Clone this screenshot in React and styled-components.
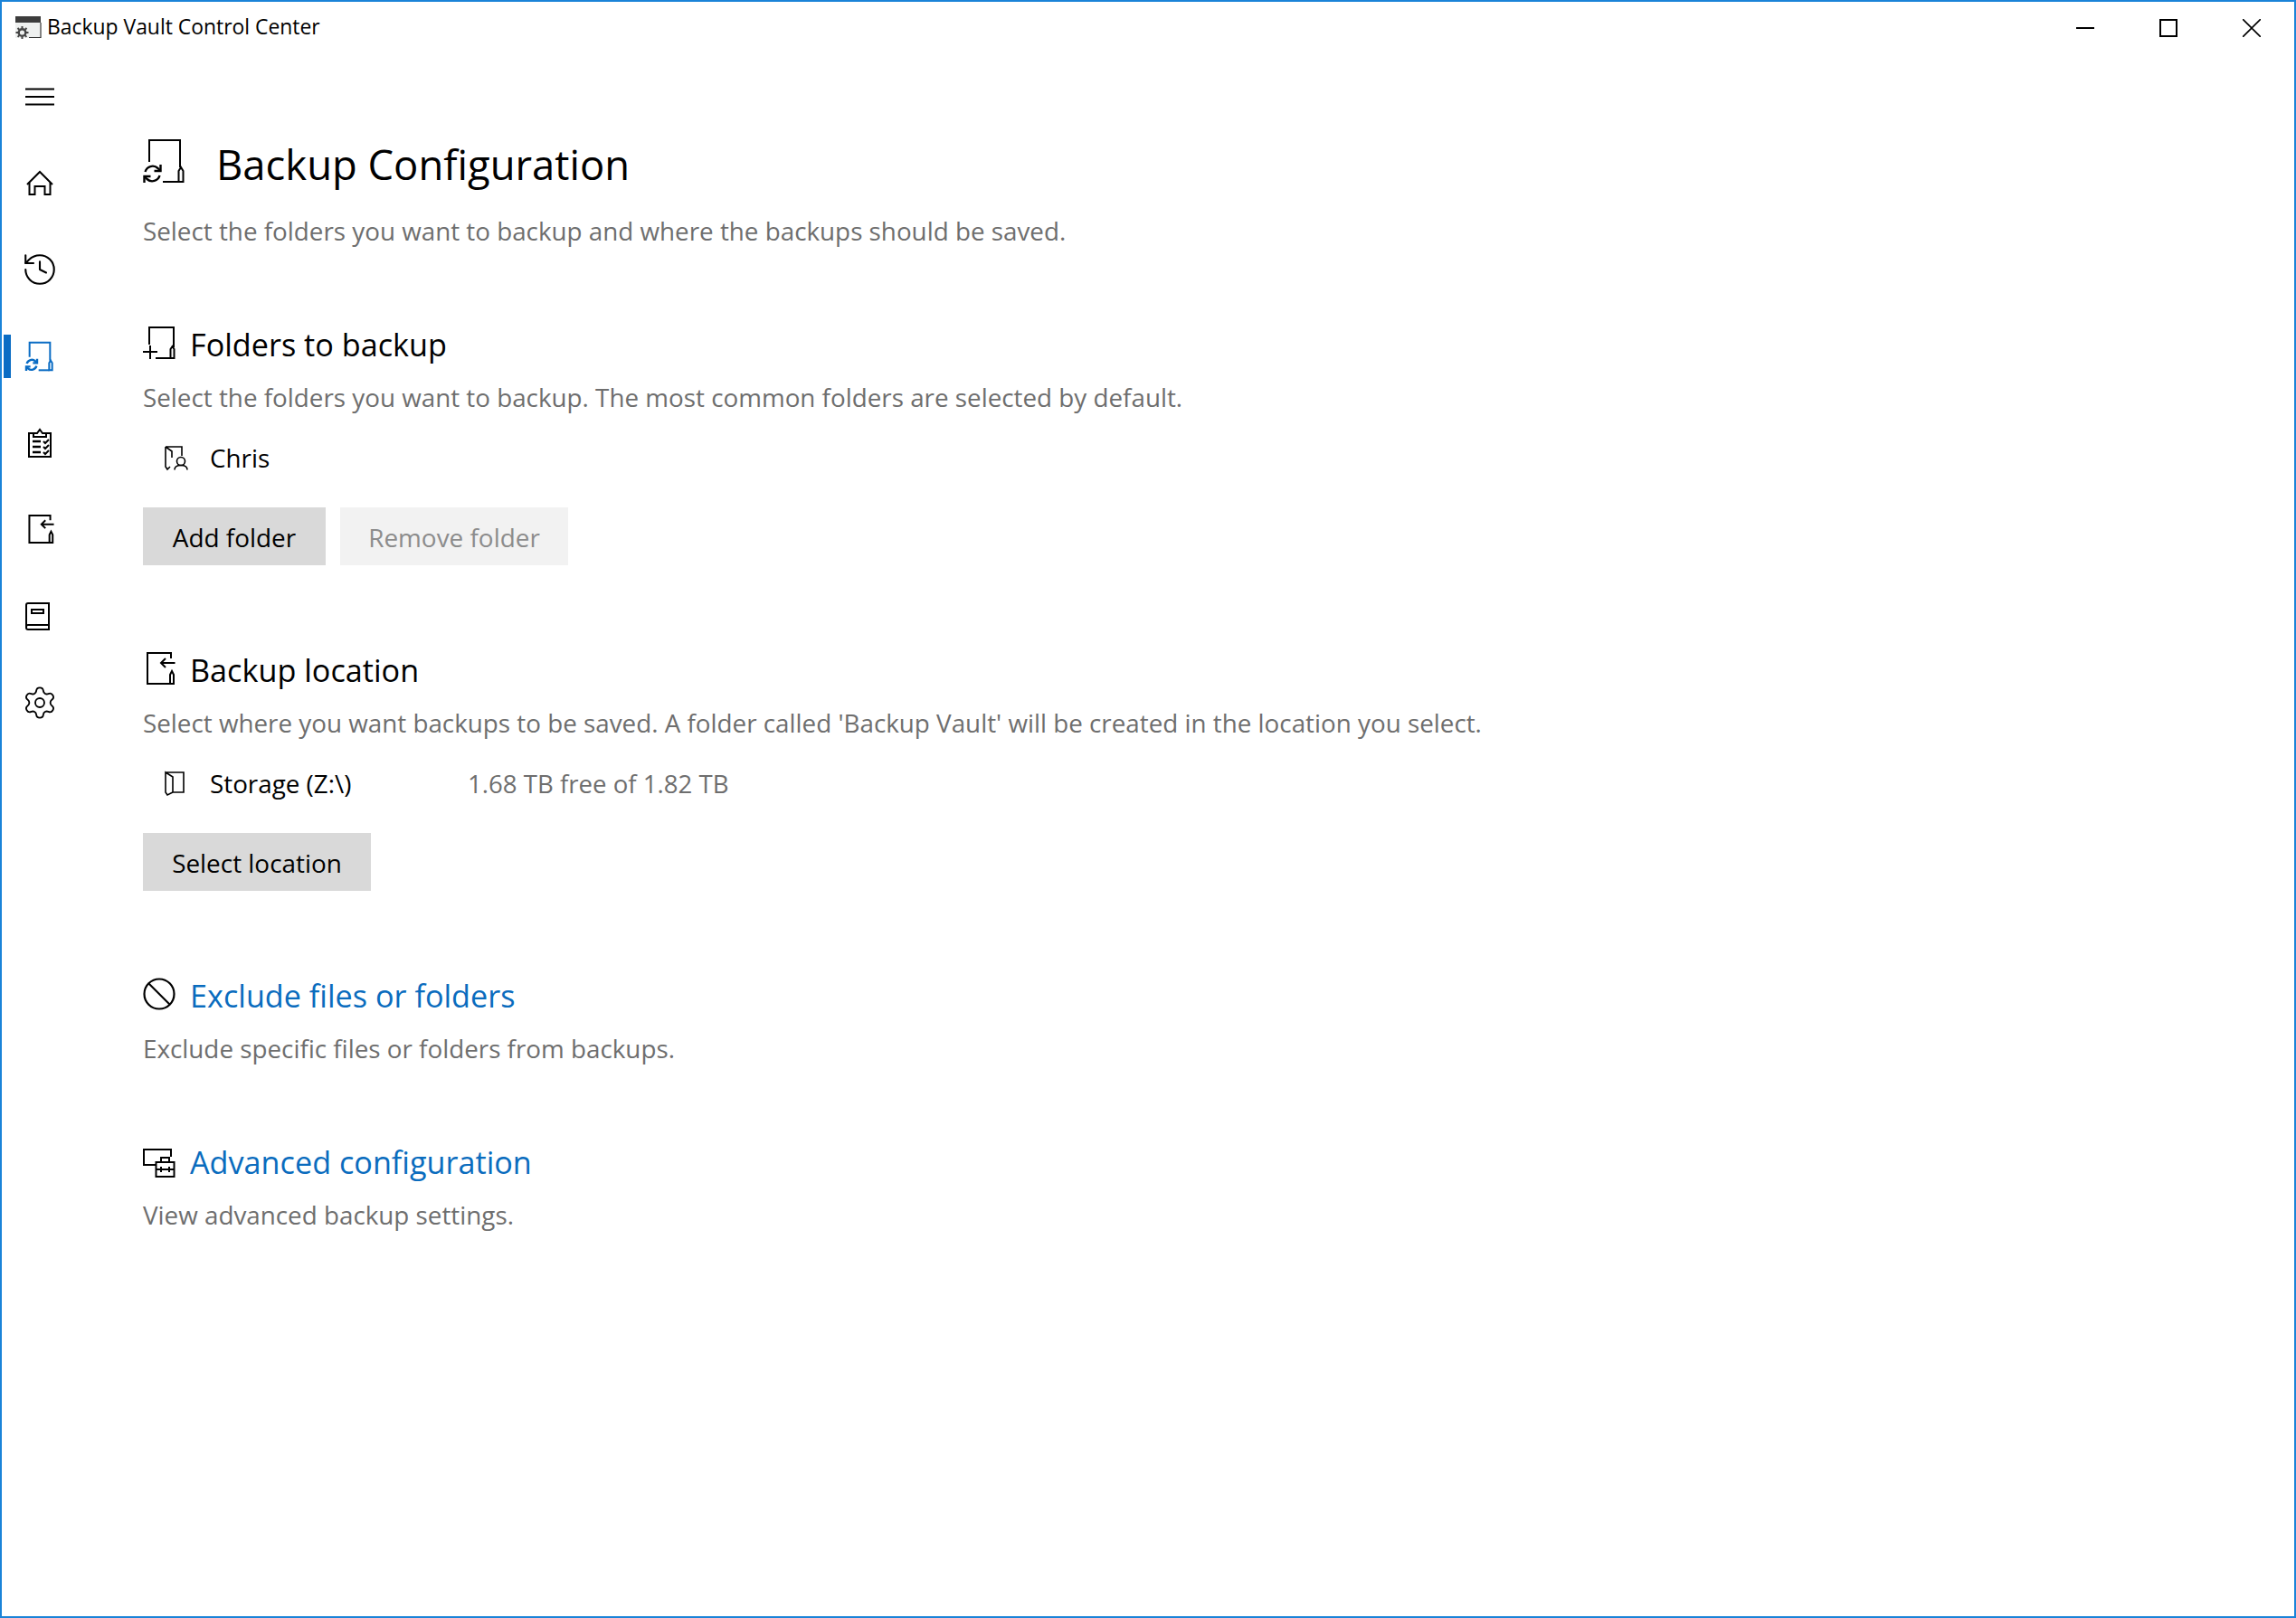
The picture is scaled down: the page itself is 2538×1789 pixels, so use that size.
import React from 'react';
import styled, { createGlobalStyle } from 'styled-components';
import { History, Settings } from 'lucide-react';

const GlobalStyle = createGlobalStyle`
  html, body {
    margin: 0;
    padding: 0;
    background: white;
  }

  * {
    box-sizing: border-box;
  }
`;

const Window = styled.div`
  width: 2538px;
  height: 1789px;
  display: flex;
  flex-direction: column;
  border: 2px solid #1a83d8;
  background: #fff;
  color: #000;
  font-family: 'Open Sans', 'Noto Sans', sans-serif;
  overflow: hidden;
`;

const TitleBar = styled.header`
  height: 57px;
  flex: none;
  display: flex;
  align-items: center;
  padding-left: 15px;
`;

const AppTitle = styled.span`
  margin: -1px 0 0 5px;
  font-size: 22.9px;
  line-height: 30px;
`;

const WindowButtons = styled.div`
  margin-left: auto;
  display: flex;
  margin-right: 1px;
`;

const WindowButton = styled.div`
  width: 92px;
  height: 56px;
  display: flex;
  align-items: center;
  justify-content: center;
`;

const Body = styled.div`
  flex: 1;
  display: flex;
`;

const Sidebar = styled.nav`
  width: 84px;
  flex: none;
  display: flex;
  flex-direction: column;
`;

const NavItem = styled.div`
  position: relative;
  height: 95.7px;
  display: flex;
  align-items: center;
  justify-content: center;
  color: ${(props) => (props.active ? '#0a6cc4' : '#000')};

  &::before {
    content: '';
    display: ${(props) => (props.active ? 'block' : 'none')};
    position: absolute;
    left: 2px;
    top: 24px;
    width: 8px;
    height: 48px;
    background: #0a6cc4;
  }
`;

const Main = styled.main`
  flex: 1;
  display: flex;
  flex-direction: column;
  padding: 90px 0 0 72px;
`;

const PageHeading = styled.div`
  height: 64px;
  display: flex;
  align-items: center;
  gap: 33px;

  svg {
    margin-top: -6px;
  }
`;

const PageTitle = styled.h1`
  margin: -1px 0 0;
  font-size: 45.4px;
  font-weight: 400;
  line-height: 64px;
`;

const Description = styled.p`
  margin: 0 0 1px;
  font-size: 27.8px;
  line-height: 40px;
  color: #6e6e6e;
`;

const PageDescription = styled(Description)`
  margin-top: 22px;
`;

const Section = styled.section`
  display: flex;
  flex-direction: column;
  margin-top: 81px;
`;

const SectionHeading = styled.div`
  height: 48px;
  margin-bottom: 14px;
  display: flex;
  align-items: center;
  gap: 16px;

  svg {
    margin-top: -4px;
  }
`;

const SectionTitle = styled.h2`
  margin: 0;
  font-size: 34.2px;
  font-weight: 400;
  line-height: 48px;
  color: ${(props) => (props.link ? '#0a6cbe' : '#000')};
`;

const ItemRow = styled.div`
  height: 40px;
  margin-top: 26px;
  padding-left: 24px;
  display: flex;
  align-items: center;
  font-size: 27.8px;
`;

const ItemName = styled.span`
  margin-left: 24px;
  min-width: 285px;
`;

const ItemDetail = styled.span`
  color: #6e6e6e;
  font-size: 27.6px;
`;

const Actions = styled.div`
  margin: 35px 0 11px;
  display: flex;
  gap: 16px;
`;

const Button = styled.button`
  height: 64px;
  width: ${(props) => props.width}px;
  padding: 1px 0 0;
  border: none;
  font-family: inherit;
  font-size: 27.9px;
  background: ${(props) => (props.disabled ? '#f2f2f2' : '#d9d9d9')};
  color: ${(props) => (props.disabled ? '#8c8c8c' : '#000')};
`;

const Svg = ({ size = 48, children, view = 48, width = 2 }) => (
  <svg
    width={size}
    height={size}
    viewBox={`0 0 ${view} ${view}`}
    fill="none"
    stroke="currentColor"
    strokeWidth={width}
    style={{ flex: 'none', display: 'block', overflow: 'visible' }}
  >
    {children}
  </svg>
);

const BackupIcon = ({ size }) => {
  // stroke stays about 2px whatever size the icon is drawn at
  const stroke = (2 * 48) / size;
  return (
    <Svg size={size} width={stroke}>
      <path d="M7 25V1h34v30" />
      <path d="M22 47h18" />
      <path d="M39.500 47V35l2.500-4 2.500 4v12z" />
      <path
        d="M2.500 36a8.500 8.500 0 0 1 14-4l3 3M18.500 40a8.500 8.500 0 0 1-14 4l-3-3"
        strokeWidth={stroke * 1.2}
      />
      <path d="M19.500 28v7h-7M1.500 48v-7h7" strokeWidth={stroke * 1.2} />
    </Svg>
  );
};

const AddFolderIcon = () => (
  <Svg size={36} view={36}>
    <path d="M7 20V1h27v22" />
    <path d="M14 35h17" />
    <path d="M30.500 35V25l2-3 2 3v10z" />
    <path d="M0 28h16M8 21v15" />
  </Svg>
);

const LocationIcon = ({ size = 36 }) => {
  const stroke = (2 * 36) / size;
  return (
    <Svg size={size} view={36} width={stroke}>
      <path d="M31 7V1H5v34h26" />
      <path d="M35.500 12H20M25 7l-5 5 5 5" />
      <path d="M30 35V25l2-4 2 4v10z" />
    </Svg>
  );
};

const HomeIcon = () => (
  <Svg size={32} view={32}>
    <path d="M2 17 16 3l14 14" />
    <path d="M4.500 15v13h6v-9h11v9h6V15" />
  </Svg>
);

const ClipboardIcon = () => (
  <Svg size={32} view={32}>
    <path d="M9 5H4v26h24V5h-5" />
    <path d="M9 9V5h4l3-4 3 4h4v4z" />
    <path d="M8 14h9M8 20h9M8 26h9" strokeWidth="2.500" />
    <path d="M20 14l2 2 4-4M20 20l2 2 4-4M20 26l2 2 4-4" />
  </Svg>
);

const BookIcon = () => (
  <Svg size={32} view={32}>
    <path d="M26 26V2H3Q1 2 1 4v25q0 2 2 2h23v-5H3q-2 0-2 2" />
    <path d="M7 9h13v4H7z" />
  </Svg>
);

const UserFolderIcon = () => (
  <Svg size={26} view={26} width={1.6}>
    <path d="M1 1h18v10M1 1l7 5v7M1 1v22l2 3 3-3" />
    <circle cx="18" cy="17" r="4.500" />
    <path d="M11 26.500q0-5 7-5t7 5" />
  </Svg>
);

const DriveIcon = () => (
  <Svg size={26} view={26} width={1.6}>
    <path d="M1 1h20v22H9M1 1l8 5v17l-6 3-2-3z" />
  </Svg>
);

const ExcludeIcon = () => (
  <Svg size={36} view={36} width={2.2}>
    <circle cx="18" cy="18" r="16.500" />
    <path d="M6.500 6.500 29.500 29.500" />
  </Svg>
);

const AdvancedIcon = () => (
  <Svg size={36} view={36}>
    <path d="M14 23H1V6h30v8" />
    <path d="M14.500 20h20v16h-20zM20 20v-5h9v5M14.500 28h20M20 25v6M29 25v6" />
  </Svg>
);

const AppIcon = () => (
  <svg width="30" height="26" viewBox="0 0 30 26" style={{ flex: 'none', display: 'block' }}>
    <rect x="0" y="0" width="28" height="7" fill="#3c3c3c" />
    <rect x="0" y="7" width="27" height="17" fill="#eef0ef" />
    <path d="M15 23.500h13V7" fill="none" stroke="#333" strokeWidth="1.200" />
    <circle cx="7.500" cy="18" r="3.800" fill="#eef0ef" stroke="#444" strokeWidth="2.400" />
    <path
      d="M7.500 11v14M.5 18h14M2.500 13l10 10M12.500 13l-10 10"
      stroke="#444"
      strokeWidth="2"
      strokeDasharray="2.500 9"
    />
  </svg>
);

const navIcons = [
  { id: 'home', icon: <HomeIcon /> },
  { id: 'history', icon: <History size={42} strokeWidth={1.2} /> },
  { id: 'backup', icon: <BackupIcon size={32} />, active: true },
  { id: 'reports', icon: <ClipboardIcon /> },
  { id: 'restore', icon: <LocationIcon size={32} /> },
  { id: 'book', icon: <BookIcon /> },
  { id: 'settings', icon: <Settings size={40} strokeWidth={1.1} /> },
];

const App = () => (
  <>
    <GlobalStyle />
    <Window>
      <TitleBar>
        <AppIcon />
        <AppTitle>Backup Vault Control Center</AppTitle>
        <WindowButtons>
          <WindowButton>
            <svg width="20" height="20" viewBox="0 0 20 20">
              <path d="M0 10h20" stroke="#000" strokeWidth="2" />
            </svg>
          </WindowButton>
          <WindowButton>
            <svg width="20" height="20" viewBox="0 0 20 20">
              <rect x="1" y="1" width="18" height="18" fill="none" stroke="#000" strokeWidth="2" />
            </svg>
          </WindowButton>
          <WindowButton>
            <svg width="20" height="20" viewBox="0 0 20 20">
              <path d="M0 0l20 20M20 0 0 20" stroke="#000" strokeWidth="1.600" />
            </svg>
          </WindowButton>
        </WindowButtons>
      </TitleBar>
      <Body>
        <Sidebar>
          <NavItem>
            <Svg size={32} view={32}>
              <path d="M0 7.500h32M0 16h32M0 24.500h32" />
            </Svg>
          </NavItem>
          {navIcons.map((item) => (
            <NavItem key={item.id} active={item.active}>
              {item.icon}
            </NavItem>
          ))}
        </Sidebar>
        <Main>
          <PageHeading>
            <BackupIcon size={48} />
            <PageTitle>Backup Configuration</PageTitle>
          </PageHeading>
          <PageDescription>
            Select the folders you want to backup and where the backups should be saved.
          </PageDescription>

          <Section>
            <SectionHeading>
              <AddFolderIcon />
              <SectionTitle>Folders to backup</SectionTitle>
            </SectionHeading>
            <Description>
              Select the folders you want to backup. The most common folders are selected by default.
            </Description>
            <ItemRow>
              <UserFolderIcon />
              <ItemName>Chris</ItemName>
            </ItemRow>
            <Actions>
              <Button width={202}>Add folder</Button>
              <Button width={252} disabled>
                Remove folder
              </Button>
            </Actions>
          </Section>

          <Section>
            <SectionHeading>
              <LocationIcon />
              <SectionTitle>Backup location</SectionTitle>
            </SectionHeading>
            <Description>
              Select where you want backups to be saved. A folder called 'Backup Vault' will be created in the location you select.
            </Description>
            <ItemRow>
              <DriveIcon />
              <ItemName>Storage (Z:\)</ItemName>
              <ItemDetail>1.68 TB free of 1.82 TB</ItemDetail>
            </ItemRow>
            <Actions>
              <Button width={252}>Select location</Button>
            </Actions>
          </Section>

          <Section>
            <SectionHeading>
              <ExcludeIcon />
              <SectionTitle link>Exclude files or folders</SectionTitle>
            </SectionHeading>
            <Description>Exclude specific files or folders from backups.</Description>
          </Section>

          <Section>
            <SectionHeading>
              <AdvancedIcon />
              <SectionTitle link>Advanced configuration</SectionTitle>
            </SectionHeading>
            <Description>View advanced backup settings.</Description>
          </Section>
        </Main>
      </Body>
    </Window>
  </>
);

export default App;
